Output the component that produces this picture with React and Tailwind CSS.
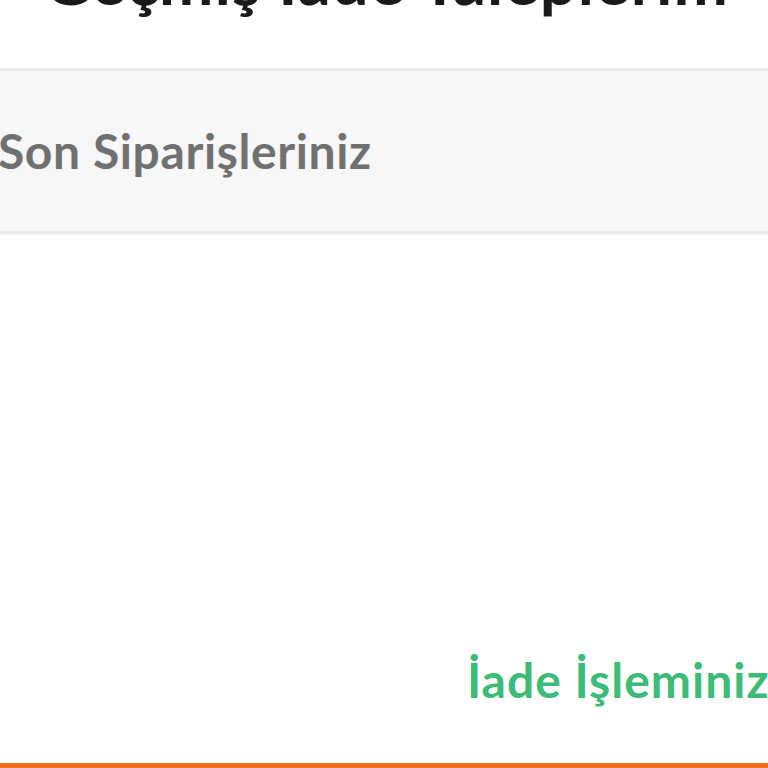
const App = () => {
  return (
    <div
      className="w-[768px] h-[768px] overflow-hidden bg-white flex flex-col"
      style={{ fontFamily: 'Lato, "Liberation Sans", sans-serif' }}
    >
      {/* page title, scrolled off the top */}
      <div className="h-[68px] shrink-0 relative overflow-hidden">
        <h1 className="absolute left-0 right-0 bottom-[55px] pl-[4px] text-center text-[65px] tracking-[1px] leading-none font-bold text-[#1a1a1a] whitespace-nowrap">
          Geçmiş İade Taleplerim
        </h1>
      </div>

      <div className="h-[166px] shrink-0 bg-[#f7f7f7] border-y-[3px] border-[#e8e8e8] flex items-center">
        <h2 className="-ml-[2px] text-[48px] tracking-[0.6px] font-bold text-[#707070] whitespace-nowrap leading-none">
          Son Siparişleriniz
        </h2>
      </div>

      <div className="flex-1 flex flex-col">
        <div className="flex-1 flex items-end pb-[59px] pl-[467px]">
          <p className="text-[48px] tracking-[1px] font-bold text-[#3dbb78] whitespace-nowrap leading-none">
            İade İşleminiz
          </p>
        </div>
        <div className="h-[5px] bg-[#f36f21]" />
      </div>
    </div>
  );
};

export default App;
